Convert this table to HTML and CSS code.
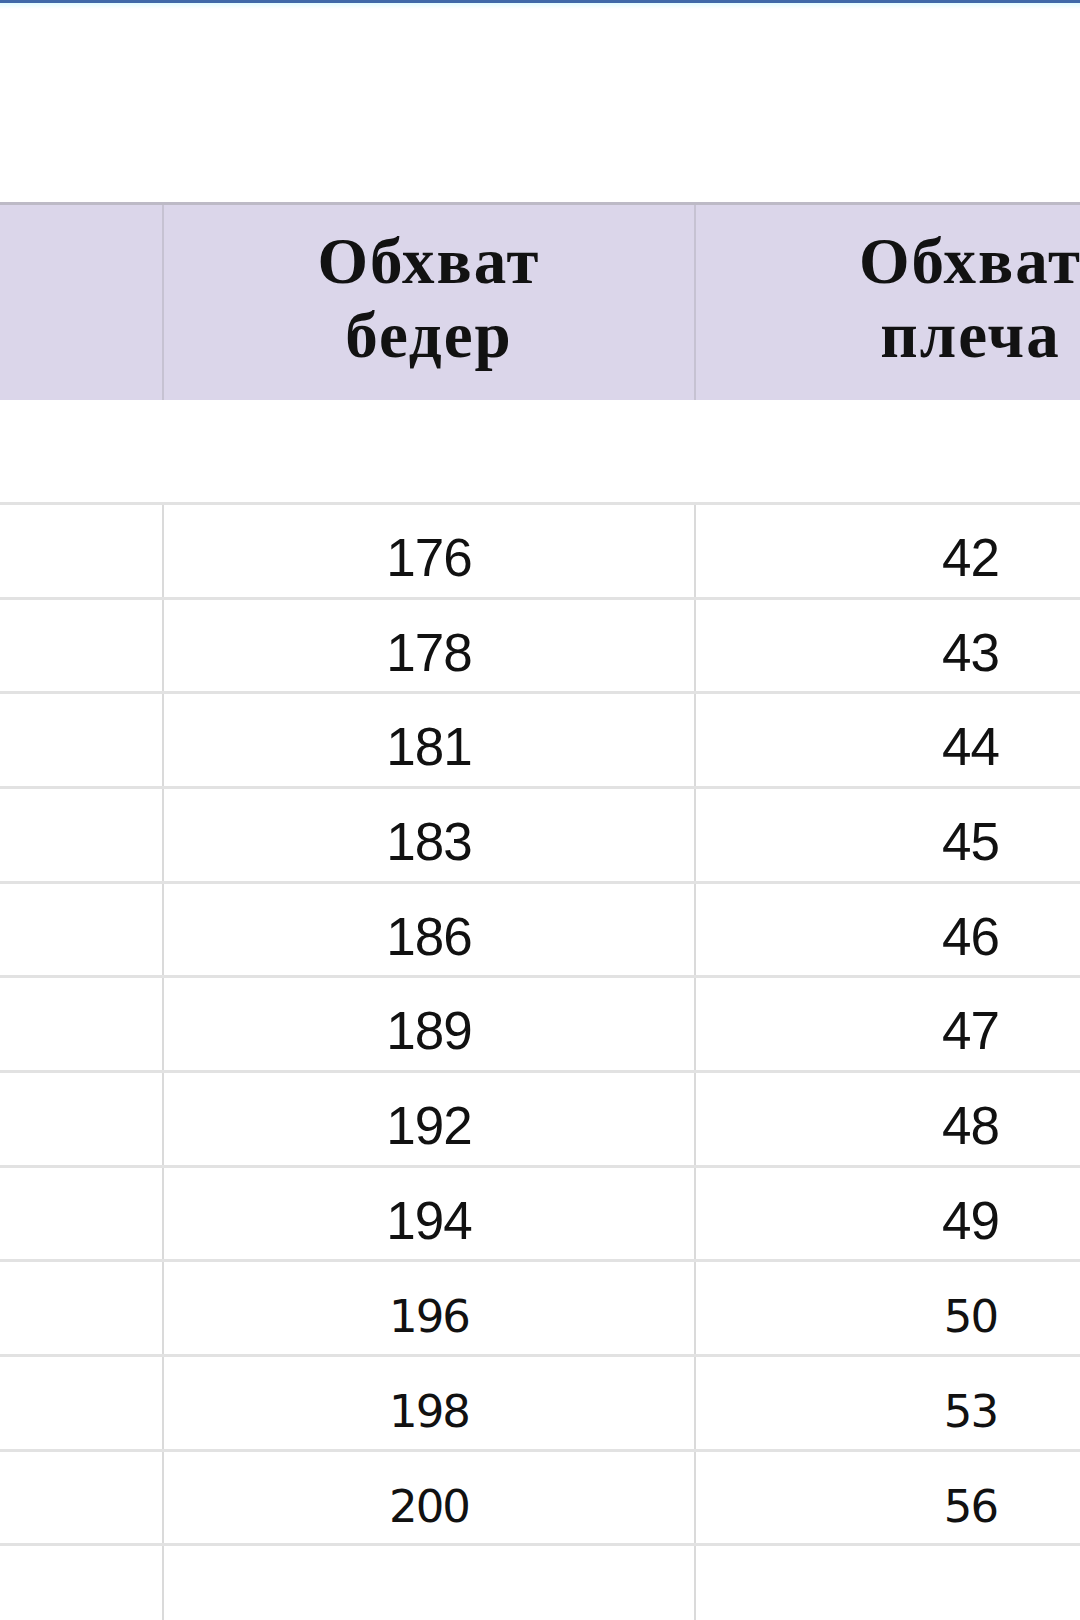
FILE: index.html
```html
<!DOCTYPE html>
<html lang="ru">
<head>
<meta charset="utf-8">
<title>Таблица размеров</title>
<link rel="stylesheet" href="styles.css">
</head>
<body>
<div class="top">
  <div class="bar"></div>
  <div class="glow"></div>
</div>
<div class="sheet">
  <div class="row head">
    <div class="cell"></div>
    <div class="cell">Обхват<br>бедер</div>
    <div class="cell">Обхват<br>плеча</div>
  </div>
  <div class="gap"></div>
  <div class="row"><div class="cell"></div><div class="cell">176</div><div class="cell">42</div></div>
  <div class="row"><div class="cell"></div><div class="cell">178</div><div class="cell">43</div></div>
  <div class="row"><div class="cell"></div><div class="cell">181</div><div class="cell">44</div></div>
  <div class="row"><div class="cell"></div><div class="cell">183</div><div class="cell">45</div></div>
  <div class="row"><div class="cell"></div><div class="cell">186</div><div class="cell">46</div></div>
  <div class="row"><div class="cell"></div><div class="cell">189</div><div class="cell">47</div></div>
  <div class="row"><div class="cell"></div><div class="cell">192</div><div class="cell">48</div></div>
  <div class="row"><div class="cell"></div><div class="cell">194</div><div class="cell">49</div></div>
  <div class="row alt"><div class="cell"></div><div class="cell">196</div><div class="cell">50</div></div>
  <div class="row alt"><div class="cell"></div><div class="cell">198</div><div class="cell">53</div></div>
  <div class="row alt"><div class="cell"></div><div class="cell">200</div><div class="cell">56</div></div>
  <div class="row"><div class="cell"></div><div class="cell"></div><div class="cell"></div></div>
</div>
</body>
</html>
```

FILE: styles.css
```css
html, body {
  margin: 0;
  padding: 0;
  overflow: hidden;
  background: #ffffff;
}
body {
  width: 1080px;
  height: 1620px;
  font-family: "Liberation Sans", Arial, sans-serif;
  color: #111111;
}
.top {
  height: 202px;
}
.bar {
  height: 3px;
  background: #4169a8;
}
.glow {
  height: 6px;
  background: linear-gradient(#e0fbff, #ffffff);
}
.sheet {
  width: 1080px;
  overflow: hidden;
}
.row {
  display: grid;
  grid-template-columns: 162px 532px 551px;
  box-sizing: border-box;
  height: 94.68px;
  border-top: 3px solid #e2e2e2;
}
.cell {
  box-sizing: border-box;
  text-align: center;
  white-space: nowrap;
  padding-top: 26px;
  font-size: 53px;
  line-height: 53px;
  letter-spacing: -1px;
}
.cell + .cell {
  border-left: 2px solid #dadada;
}
.row.alt .cell {
  font-family: "DejaVu Sans", Verdana, sans-serif;
  font-size: 45px;
  line-height: 45px;
  letter-spacing: -2px;
  padding-top: 32px;
}
.row.head {
  height: 198px;
  border-top: 3px solid #bdbac6;
  background: #dbd6ea;
}
.row.head .cell {
  font-family: "Liberation Serif", "DejaVu Serif", serif;
  font-weight: bold;
  font-size: 65px;
  line-height: 74px;
  letter-spacing: 2px;
  padding-top: 19px;
  color: #121212;
}
.row.head .cell + .cell {
  border-left: 2px solid #c6c2d2;
}
.gap {
  height: 102px;
}
```
